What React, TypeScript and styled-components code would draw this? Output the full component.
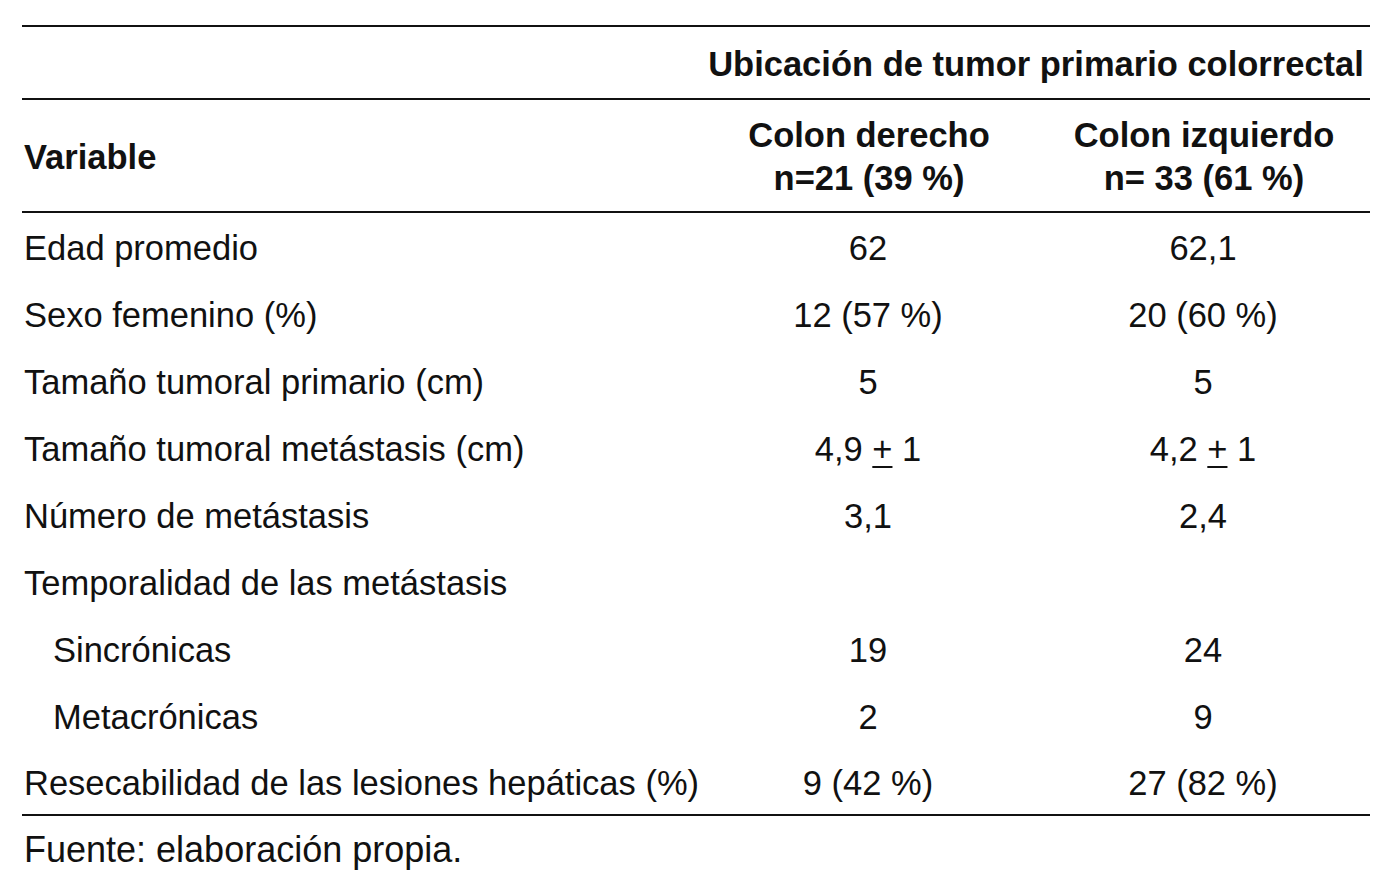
import styled, { createGlobalStyle } from 'styled-components';

interface IRow {
   label: string;
   right: React.ReactNode;
   left: React.ReactNode;
   indent?: boolean;
}

const GlobalStyle = createGlobalStyle`
   html, body {
      margin: 0;
      padding: 0;
      background: #ffffff;
   }

   body {
      font-family: 'Liberation Sans', Arial, sans-serif;
      color: #111111;
   }
`;

const PlusMinus = ({ value }: { value: string }) => (
   <>
      {value} <Underlined>+</Underlined> 1
   </>
);

const rows: IRow[] = [
   { label: 'Edad promedio', right: '62', left: '62,1' },
   { label: 'Sexo femenino (%)', right: '12 (57 %)', left: '20 (60 %)' },
   { label: 'Tamaño tumoral primario (cm)', right: '5', left: '5' },
   {
      label: 'Tamaño tumoral metástasis (cm)',
      right: <PlusMinus value='4,9' />,
      left: <PlusMinus value='4,2' />,
   },
   { label: 'Número de metástasis', right: '3,1', left: '2,4' },
   { label: 'Temporalidad de las metástasis', right: '', left: '' },
   { label: 'Sincrónicas', right: '19', left: '24', indent: true },
   { label: 'Metacrónicas', right: '2', left: '9', indent: true },
   { label: 'Resecabilidad de las lesiones hepáticas (%)', right: '9 (42 %)', left: '27 (82 %)' },
];

const App = () => {
   return (
      <>
         <GlobalStyle />
         <StyledPage>
            <Table>
               <colgroup>
                  <col style={{ width: 678 }} />
                  <col style={{ width: 336 }} />
                  <col style={{ width: 334 }} />
               </colgroup>
               <thead>
                  <GroupRow>
                     <HeadCell />
                     <HeadCell colSpan={2} $center>
                        Ubicación de tumor primario colorrectal
                     </HeadCell>
                  </GroupRow>
                  <ColumnsRow>
                     <HeadCell>Variable</HeadCell>
                     <HeadCell $center>
                        Colon derecho
                        <br />
                        n=21 (39 %)
                     </HeadCell>
                     <HeadCell $center>
                        Colon izquierdo
                        <br />
                        n= 33 (61 %)
                     </HeadCell>
                  </ColumnsRow>
               </thead>
               <tbody>
                  {rows.map((row) => (
                     <BodyRow key={row.label}>
                        <LabelCell $indent={row.indent}>{row.label}</LabelCell>
                        <ValueCell>{row.right}</ValueCell>
                        <ValueCell>{row.left}</ValueCell>
                     </BodyRow>
                  ))}
               </tbody>
            </Table>
            <Source>Fuente: elaboración propia.</Source>
         </StyledPage>
      </>
   );
};

const StyledPage = styled.div`
   width: 1348px;
   padding: 25px 30px 0 22px;
   font-size: 34.5px;
`;

const Table = styled.table`
   width: 1348px;
   table-layout: fixed;
   border-collapse: collapse;
   border-top: 2px solid #111111;
   border-bottom: 2px solid #111111;
`;

const GroupRow = styled.tr`
   height: 73px;
   border-bottom: 2px solid #111111;
`;

const ColumnsRow = styled.tr`
   height: 113px;
   border-bottom: 2px solid #111111;
`;

const HeadCell = styled.th<{ $center?: boolean }>`
   padding: 3px 0 0 2px;
   font-weight: bold;
   line-height: 43px;
   text-align: ${({ $center }) => ($center ? 'center' : 'left')};
   vertical-align: middle;
`;

const BodyRow = styled.tr`
   height: 67px;
`;

const LabelCell = styled.td<{ $indent?: boolean }>`
   padding: 4px 0 0 ${({ $indent }) => ($indent ? '31px' : '2px')};
   line-height: 38px;
   vertical-align: middle;
   white-space: nowrap;
`;

const ValueCell = styled.td`
   padding: 4px 0 0;
   line-height: 38px;
   text-align: center;
   vertical-align: middle;
`;

const Underlined = styled.span`
   text-decoration: underline;
   text-decoration-thickness: 2px;
   text-underline-offset: 5px;
`;

const Source = styled.p`
   margin: 0;
   padding: 14px 0 0 2px;
   font-size: 36px;
   line-height: 40px;
`;

export default App;
